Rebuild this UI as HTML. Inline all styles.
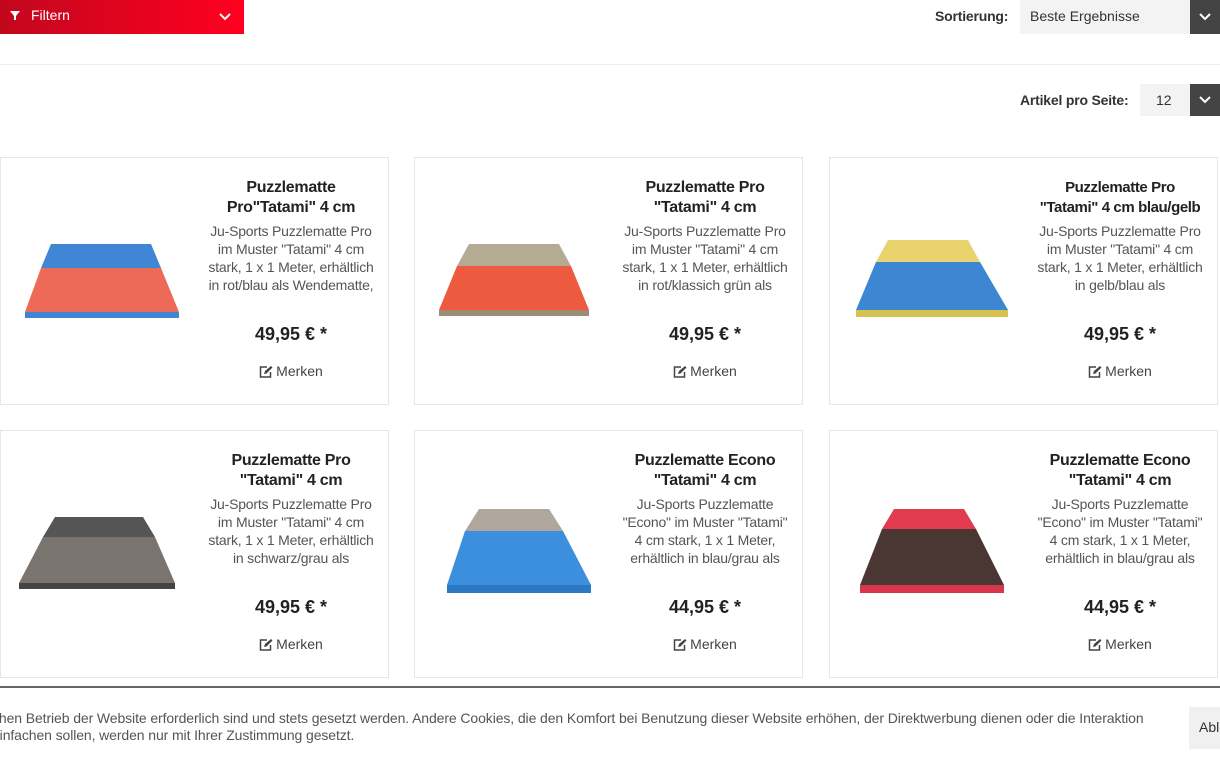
<!DOCTYPE html><html><head><meta charset="utf-8"><style>
*{margin:0;padding:0;box-sizing:border-box}
body{width:1220px;height:765px;overflow:hidden;background:#fff;font-family:"Liberation Sans",sans-serif;color:#333;position:relative}
.filter{position:absolute;left:0;top:0;width:244px;height:34px;background:linear-gradient(90deg,#c2071d,#ff0020);color:#fff;font-size:14px}
.filter span{position:absolute;left:31px;top:7px}
.hr{position:absolute;left:0;right:0;top:64px;border-top:1px solid #eee}
.lbl{position:absolute;font-size:14px;font-weight:bold;color:#333;letter-spacing:-0.2px}
.sel{position:absolute;background:#f3f3f3;font-size:14px;color:#333}
.sel b{position:absolute;right:0;top:0;width:30px;height:100%;background:#444}
.card{position:absolute;width:389px;height:248px;border:1px solid #e6e6e6}
.card svg.mat{position:absolute;left:14px;top:70px}
.txt{position:absolute;left:190px;width:200px;text-align:center;white-space:nowrap}
.t{top:20px;font-weight:bold;font-size:16px;line-height:20px;color:#222;letter-spacing:-0.3px}
.d{font-size:14px;line-height:18px;color:#555;letter-spacing:-0.2px}
.p{position:absolute;left:200px;width:180px;text-align:center;top:166px;font-weight:bold;font-size:18px;color:#222}
.m{position:absolute;left:200px;width:180px;text-align:center;top:205px;font-size:14px;color:#444}
.m svg{vertical-align:-2px;margin-right:3px}
.cook{position:absolute;left:0;right:0;top:686px;bottom:0;border-top:2px solid #666;font-size:14px;color:#555;line-height:17px}
.cook p{position:absolute;left:0;top:22px;white-space:nowrap;margin-left:-8px;letter-spacing:-0.1px}
.btn{position:absolute;left:1189px;top:19px;width:40px;height:42px;background:#f0f0f0;padding:12px 10px;font-size:14px;color:#333}
</style></head><body>
<div class="filter"><svg style="position:absolute;left:9px;top:10px" width="12" height="12" viewBox="0 0 12 12"><path d="M1 1h10L7 6v4H5V6z" fill="#fff"/></svg><span>Filtern</span><svg style="position:absolute;left:219px;top:13px" width="12" height="8"><path d="M1 1l5 5 5-5" stroke="#fff" stroke-width="2" fill="none"/></svg></div>
<div class="lbl" style="left:935px;top:8px">Sortierung:</div>
<div class="sel" style="left:1020px;top:0;width:200px;height:34px;padding:8px 10px">Beste Ergebnisse<b><svg style="margin:13px 9px" width="12" height="8"><path d="M1 1l5 5 5-5" stroke="#fff" stroke-width="2" fill="none"/></svg></b></div>
<div class="hr"></div>
<div class="lbl" style="left:1020px;top:92px">Artikel pro Seite:</div>
<div class="sel" style="left:1140px;top:84px;width:80px;height:32px;padding:8px 16px">12<b><svg style="margin:12px 9px" width="12" height="8"><path d="M1 1l5 5 5-5" stroke="#fff" stroke-width="2" fill="none"/></svg></b></div>

<div class="card" style="left:0;top:157px"><svg class="mat" width="170" height="100"><polygon points="36,16 136,16 146,40 26,40" fill="#3f86d4"/><polygon points="26,40 146,40 164,84 10,84" fill="#ee6a58"/><rect x="10" y="84" width="154" height="6" fill="#3f86d4"/></svg>
<div class="txt t">Puzzlematte<br>Pro"Tatami" 4 cm</div><div class="txt d" style="top:64px">Ju-Sports Puzzlematte Pro<br>im Muster "Tatami" 4 cm<br>stark, 1 x 1 Meter, erhältlich<br>in rot/blau als Wendematte,</div><div class="p">49,95 € *</div><div class="m"><svg width="14" height="13" viewBox="0 0 14 13"><path d="M8 2H1.5v10h10V7" stroke="#444" stroke-width="1.5" fill="none"/><path d="M5 9l1-3 6-5 1.5 1.5-6 6z" fill="#444"/></svg>Merken</div></div>

<div class="card" style="left:414px;top:157px"><svg class="mat" width="170" height="100"><polygon points="40,16 130,16 142,38 28,38" fill="#b5ab95"/><polygon points="28,38 142,38 160,82 10,82" fill="#ec5a40"/><rect x="10" y="82" width="150" height="6" fill="#9c8d73"/></svg>
<div class="txt t">Puzzlematte Pro<br>"Tatami" 4 cm</div><div class="txt d" style="top:64px">Ju-Sports Puzzlematte Pro<br>im Muster "Tatami" 4 cm<br>stark, 1 x 1 Meter, erhältlich<br>in rot/klassich grün als</div><div class="p">49,95 € *</div><div class="m"><svg width="14" height="13" viewBox="0 0 14 13"><path d="M8 2H1.5v10h10V7" stroke="#444" stroke-width="1.5" fill="none"/><path d="M5 9l1-3 6-5 1.5 1.5-6 6z" fill="#444"/></svg>Merken</div></div>

<div class="card" style="left:829px;top:157px"><svg class="mat" width="170" height="100"><polygon points="44,12 124,12 136,34 32,34" fill="#e9d36f"/><polygon points="32,34 136,34 164,82 12,82" fill="#3c86d2"/><rect x="12" y="82" width="152" height="7" fill="#d6c24e"/></svg>
<div class="txt t" style="font-size:15px;letter-spacing:-0.4px">Puzzlematte Pro<br>"Tatami" 4 cm blau/gelb</div><div class="txt d" style="top:64px">Ju-Sports Puzzlematte Pro<br>im Muster "Tatami" 4 cm<br>stark, 1 x 1 Meter, erhältlich<br>in gelb/blau als</div><div class="p">49,95 € *</div><div class="m"><svg width="14" height="13" viewBox="0 0 14 13"><path d="M8 2H1.5v10h10V7" stroke="#444" stroke-width="1.5" fill="none"/><path d="M5 9l1-3 6-5 1.5 1.5-6 6z" fill="#444"/></svg>Merken</div></div>

<div class="card" style="left:0;top:430px"><svg class="mat" width="170" height="100"><polygon points="40,16 128,16 140,36 28,36" fill="#555"/><polygon points="28,36 140,36 160,82 4,82" fill="#7a746e"/><rect x="4" y="82" width="156" height="6" fill="#444"/></svg>
<div class="txt t">Puzzlematte Pro<br>"Tatami" 4 cm</div><div class="txt d" style="top:64px">Ju-Sports Puzzlematte Pro<br>im Muster "Tatami" 4 cm<br>stark, 1 x 1 Meter, erhältlich<br>in schwarz/grau als</div><div class="p">49,95 € *</div><div class="m"><svg width="14" height="13" viewBox="0 0 14 13"><path d="M8 2H1.5v10h10V7" stroke="#444" stroke-width="1.5" fill="none"/><path d="M5 9l1-3 6-5 1.5 1.5-6 6z" fill="#444"/></svg>Merken</div></div>

<div class="card" style="left:414px;top:430px"><svg class="mat" width="170" height="110"><polygon points="50,8 120,8 134,30 36,30" fill="#b0a79c"/><polygon points="36,30 134,30 162,84 18,84" fill="#3b8fdc"/><rect x="18" y="84" width="144" height="8" fill="#2c78c4"/></svg>
<div class="txt t">Puzzlematte Econo<br>"Tatami" 4 cm</div><div class="txt d" style="top:64px">Ju-Sports Puzzlematte<br>"Econo" im Muster "Tatami"<br>4 cm stark, 1 x 1 Meter,<br>erhältlich in blau/grau als</div><div class="p">44,95 € *</div><div class="m"><svg width="14" height="13" viewBox="0 0 14 13"><path d="M8 2H1.5v10h10V7" stroke="#444" stroke-width="1.5" fill="none"/><path d="M5 9l1-3 6-5 1.5 1.5-6 6z" fill="#444"/></svg>Merken</div></div>

<div class="card" style="left:829px;top:430px"><svg class="mat" width="170" height="110"><polygon points="50,8 120,8 132,28 38,28" fill="#e23a4e"/><polygon points="38,28 132,28 160,84 16,84" fill="#4a3632"/><rect x="16" y="84" width="144" height="8" fill="#d8364a"/></svg>
<div class="txt t">Puzzlematte Econo<br>"Tatami" 4 cm</div><div class="txt d" style="top:64px">Ju-Sports Puzzlematte<br>"Econo" im Muster "Tatami"<br>4 cm stark, 1 x 1 Meter,<br>erhältlich in blau/grau als</div><div class="p">44,95 € *</div><div class="m"><svg width="14" height="13" viewBox="0 0 14 13"><path d="M8 2H1.5v10h10V7" stroke="#444" stroke-width="1.5" fill="none"/><path d="M5 9l1-3 6-5 1.5 1.5-6 6z" fill="#444"/></svg>Merken</div></div>

<div class="cook"><p>chen Betrieb der Website erforderlich sind und stets gesetzt werden. Andere Cookies, die den Komfort bei Benutzung dieser Website erhöhen, der Direktwerbung dienen oder die Interaktion<br>einfachen sollen, werden nur mit Ihrer Zustimmung gesetzt.</p><div class="btn">Abl</div></div>
</body></html>
